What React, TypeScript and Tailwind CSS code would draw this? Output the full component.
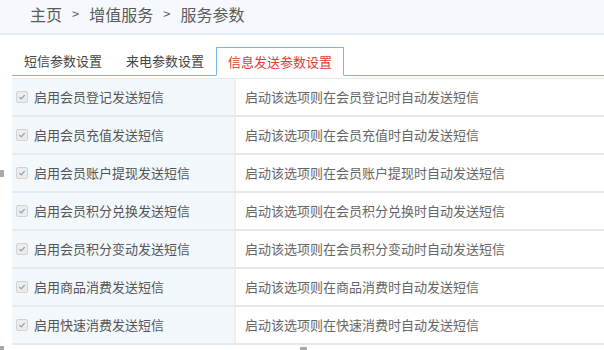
import React from 'react';

const tabs = ['短信参数设置', '来电参数设置', '信息发送参数设置'];

const rows = [
  ['启用会员登记发送短信', '启动该选项则在会员登记时自动发送短信'],
  ['启用会员充值发送短信', '启动该选项则在会员充值时自动发送短信'],
  ['启用会员账户提现发送短信', '启动该选项则在会员账户提现时自动发送短信'],
  ['启用会员积分兑换发送短信', '启动该选项则在会员积分兑换时自动发送短信'],
  ['启用会员积分变动发送短信', '启动该选项则在会员积分变动时自动发送短信'],
  ['启用商品消费发送短信', '启动该选项则在商品消费时自动发送短信'],
  ['启用快速消费发送短信', '启动该选项则在快速消费时自动发送短信'],
];

function CheckMark() {
  return (
    <span className="flex h-[12px] w-[12px] shrink-0 items-center justify-center rounded-[2px] border border-[#d2d2d2] bg-[#ececec]">
      <svg viewBox="0 0 10 10" className="h-[8px] w-[8px]">
        <path d="M1.8 5.2 L4 7.3 L8.3 2.6" fill="none" stroke="#9a9a9a" strokeWidth="1.6" />
      </svg>
    </span>
  );
}

export default function App() {
  return (
    <div
      className="relative h-[350px] w-[604px] overflow-hidden bg-white text-[#555]"
      style={{ fontFamily: '"Microsoft YaHei", "Noto Sans CJK SC", "Noto Sans", sans-serif' }}
    >
      {/* Breadcrumb */}
      <div className="flex h-[35px] items-center border-b-2 border-[#e8ecf0] bg-[#f5f9fd] pb-[6px] pl-[30px] text-[16px] text-[#5a5a5a]">
        <span>主页</span>
        <span className="mx-[10px] text-[13px]">&gt;</span>
        <span>增值服务</span>
        <span className="mx-[10px] text-[13px]">&gt;</span>
        <span>服务参数</span>
      </div>

      <div className="pl-[12px]">
        {/* Tabs */}
        <div className="mt-[12px] flex h-[29px] border-b border-[#7ab6e0]">
          {tabs.map((t, i) =>
            i === 2 ? (
              <div
                key={t}
                className="-mb-px flex items-center border border-b-white border-[#7ab6e0] bg-white px-[11px] text-[13px] text-[#e23a3a]"
              >
                {t}
              </div>
            ) : (
              <div key={t} className="flex items-center border border-transparent px-[11px] text-[13px] text-[#444]">
                {t}
              </div>
            )
          )}
        </div>

        {/* Table */}
        <div className="mt-[2px] w-[640px] border-t border-[#e8e8e8]">
          {rows.map(([name, desc]) => (
            <div key={name} className="flex h-[38px] border-b-2 border-[#e9e9e9]">
              <div className="flex w-[224px] shrink-0 items-center gap-[6px] border-r-2 border-[#eceff2] bg-[#f3f8fd] pl-[4px] text-[13px] text-[#555]">
                <CheckMark />
                <span>{name}</span>
              </div>
              <div className="flex flex-1 items-center pl-[9px] text-[13px] text-[#666]">{desc}</div>
            </div>
          ))}
        </div>
      </div>

      {/* stray marks */}
      <span className="absolute left-0 top-[170px] h-[7px] w-[4px] bg-[#a9a9a9]" />
      <span className="absolute left-0 top-[346px] h-[4px] w-[4px] bg-[#a9a9a9]" />
      <span className="absolute left-[300px] top-[347px] h-[3px] w-[7px] bg-[#a9a9a9]" />
    </div>
  );
}
